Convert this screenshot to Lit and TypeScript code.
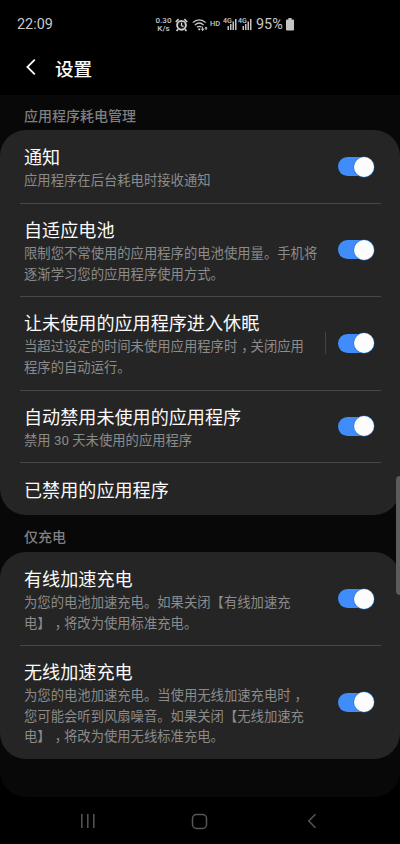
import { LitElement, html, css, svg, nothing } from "lit";
import { customElement, property } from "lit/decorators.js";

interface Item {
  title: string;
  lines: string[];
  height: number;
  toggle: boolean;
  split?: boolean;
}

const POWER: Item[] = [
  { title: "通知", lines: ["应用程序在后台耗电时接收通知"], height: 73, toggle: true },
  { title: "自适应电池", lines: ["限制您不常使用的应用程序的电池使用量。手机将", "逐渐学习您的应用程序使用方式。"], height: 93, toggle: true },
  { title: "让未使用的应用程序进入休眠", lines: ["当超过设定的时间未使用应用程序时，关闭应用", "程序的自动运行。"], height: 94, toggle: true, split: true },
  { title: "自动禁用未使用的应用程序", lines: ["禁用 30 天未使用的应用程序"], height: 72, toggle: true },
  { title: "已禁用的应用程序", lines: [], height: 53, toggle: false },
];

const CHARGE: Item[] = [
  { title: "有线加速充电", lines: ["为您的电池加速充电。如果关闭【有线加速充", "电】，将改为使用标准充电。"], height: 93, toggle: true },
  { title: "无线加速充电", lines: ["为您的电池加速充电。当使用无线加速充电时，", "您可能会听到风扇噪音。如果关闭【无线加速充", "电】，将改为使用无线标准充电。"], height: 114, toggle: true },
];

@customElement("setting-row")
export class SettingRow extends LitElement {
  @property({ attribute: false }) item!: Item;

  static styles = css`
    :host { display: block; }
    .row { box-sizing: border-box; height: 100%; display: flex; align-items: center; padding: 0 26px 0 24px; }
    .text { flex: 1; min-width: 0; white-space: nowrap; padding-top: 4px; }
    .title { font-size: 18.1px; line-height: 26px; color: #fafafa; }
    .line { font-size: 13.33px; line-height: 20.7px; color: #8b8b8b; text-spacing-trim: space-all; }
    .comma { font-feature-settings: "halt" 1; padding: 0 2.67px 0 4px; }
    .split { width: 1px; height: 22px; background: #434343; margin-right: 12px; }
    .switch { box-sizing: border-box; width: 36px; height: 19px; border-radius: 10px; background: #408cfb; display: flex; align-items: center; justify-content: flex-end; flex: none; }
    .knob { width: 20px; height: 20px; flex: none; border-radius: 50%; background: #fcfcfc; box-shadow: 0 0 0 0.5px #1e6fc4; }
  `;

  private line(text: string) {
    const parts = text.split("，");
    return html`<div class="line">${parts.map((p, i) => html`${i ? html`<span class="comma">，</span>` : nothing}${p}`)}</div>`;
  }

  render() {
    const { title, lines, toggle, split } = this.item;
    return html`<div class="row">
      <div class="text"><div class="title">${title}</div>${lines.map((l) => this.line(l))}</div>
      ${split ? html`<div class="split"></div>` : nothing}
      ${toggle ? html`<div class="switch"><div class="knob"></div></div>` : nothing}
    </div>`;
  }
}

const signal = svg`
  <g fill="#c4c4c4">
    <rect x="3.5" y="8" width="1.5" height="4"/><rect x="6" y="6" width="1.5" height="6"/>
    <rect x="8.5" y="3.5" width="1.5" height="8.5"/><rect x="11" y="1" width="1.5" height="11"/>
  </g>`;

@customElement("app-root")
export class AppRoot extends LitElement {
  static styles = css`
    :host { display: block; font-family: Roboto, "Noto Sans CJK SC", sans-serif; }
    .screen { position: relative; width: 400px; height: 844px; background: #000; overflow: hidden; display: flex; flex-direction: column; }
    .status { height: 48px; flex: none; box-sizing: border-box; padding: 1px 106px 0 17px; display: flex; align-items: center; color: #c8c8c8; }
    .time { font-size: 14.4px; flex: 1; }
    .speed { font-size: 8px; line-height: 7.5px; text-align: center; font-weight: 500; width: 17px; margin-right: 3px; }
    .alarm { margin-right: 4px; }
    .wifi { margin-right: 2px; }
    .hd { font-size: 7.5px; font-weight: 500; width: 11px; margin-right: 2px; margin-top: -2px; }
    .net { position: relative; width: 15px; height: 13px; display: block; }
    .net svg { position: absolute; left: 1px; top: 0; }
    .gen { position: absolute; left: 0; top: -1px; font-size: 7px; line-height: 8px; font-weight: 500; }
    .pct { font-size: 14.4px; margin-left: 3px; width: 27px; }
    .batt { margin-left: 3px; }
    svg { display: block; flex: none; }
    .header { height: 47px; flex: none; box-sizing: border-box; padding: 0 0 9px 24px; display: flex; align-items: center; color: #fafafa; font-size: 18.6px; font-weight: 500; }
    .header svg { margin-right: 17px; }
    .body { height: 702px; flex: none; background: #080808; border-radius: 0 0 26px 26px; }
    .label { box-sizing: border-box; padding-left: 24px; font-size: 14px; font-weight: 500; color: #7f7f7f; display: flex; align-items: center; }
    .first { height: 35px; padding-top: 5px; }
    .second { height: 37px; padding-top: 5px; }
    .card { background: #252525; border-radius: 26px; }
    .rule { height: 1px; margin: 0 19px -1px 20px; background: #484848; }
    .nav { flex: 1; display: flex; align-items: center; padding: 1px 0 0 80px; }
    .home { margin: 0 104px 0 95px; }
    .back { margin-left: -6px; }
    .scroll { position: absolute; right: 0; top: 476px; width: 4px; height: 119px; border-radius: 4px 0 0 4px; background: #5c5c5c; }
  `;

  private card(items: Item[]) {
    return html`<div class="card">${items.map(
      (item, i) => html`${i ? html`<div class="rule"></div>` : nothing}
        <setting-row .item=${item} style="height:${item.height}px"></setting-row>`,
    )}</div>`;
  }

  render() {
    const net = html`<span class="net"><svg width="13" height="13" viewBox="0 0 13 13">${signal}</svg><span class="gen">4G</span></span>`;
    return html`<div class="screen">
      <div class="status">
        <div class="time">22:09</div>
        <div class="speed">0.30<br />K/s</div>
        <svg class="alarm" width="13" height="14" viewBox="0 0 13 14">
          <circle cx="6.5" cy="7.3" r="4.4" fill="#111" stroke="#d0d0d0" stroke-width="1.9"/>
          <path d="M.8 4 3.6 1.2M12.2 4 9.4 1.2M3 11.3l-1.4 1.8M10 11.3l1.4 1.8" stroke="#d0d0d0" stroke-width="1.7"/>
          <path d="M6.5 4.6v3l2 1" fill="none" stroke="#d0d0d0" stroke-width="1.2"/>
        </svg>
        <svg class="wifi" width="16" height="14" viewBox="0 0 16 14">
          <path d="M.8 4.6C4.5 1 10 1 13.7 4.6M2.8 7.1c2.7-2.6 6.2-2.6 8.9 0M4.9 9.3c1.5-1.2 3.2-1.2 4.6 0" fill="none" stroke="#c8c8c8" stroke-width="1.3"/>
          <circle cx="7.2" cy="11.3" r="1.1" fill="#c8c8c8"/>
          <path d="M10.6 8.6v2.8M14 12V9.8" fill="none" stroke="#c8c8c8" stroke-width="1"/>
          <path d="M8.8 10.8h3.6l-1.8 2.4zM12.3 10.6h3.4L14 8.4z" fill="#c8c8c8"/>
        </svg>
        <div class="hd">HD</div>
        ${net}${net}
        <div class="pct">95%</div>
        <svg class="batt" width="8" height="13" viewBox="0 0 8 13"><path d="M2.4 0h3.2v1.4H7.2a.8.8 0 0 1 .8.8v9.6a.8.8 0 0 1-.8.8H.8a.8.8 0 0 1-.8-.8V2.2a.8.8 0 0 1 .8-.8h1.6z" fill="#c4c4c4"/></svg>
      </div>
      <div class="header">
        <svg width="14" height="18" viewBox="0 0 14 18"><path d="M10.8 1.6 3.4 9l7.4 7.4" fill="none" stroke="#fafafa" stroke-width="1.8"/></svg>设置
      </div>
      <div class="body">
        <div class="label first">应用程序耗电管理</div>
        ${this.card(POWER)}
        <div class="label second">仅充电</div>
        ${this.card(CHARGE)}
      </div>
      <div class="nav">
        <svg width="16" height="16" viewBox="0 0 16 16"><path d="M1.8 1v14M7.8 1v14M13.8 1v14" stroke="#565656" stroke-width="1.5"/></svg>
        <svg class="home" width="17" height="17" viewBox="0 0 17 17"><rect x="1.5" y="1.5" width="14" height="14" rx="4" fill="none" stroke="#565656" stroke-width="1.5"/></svg>
        <svg class="back" width="12" height="16" viewBox="0 0 12 16"><path d="M9.5 1.2 2.8 8l6.7 6.8" fill="none" stroke="#565656" stroke-width="1.5"/></svg>
      </div>
      <div class="scroll"></div>
    </div>`;
  }
}
